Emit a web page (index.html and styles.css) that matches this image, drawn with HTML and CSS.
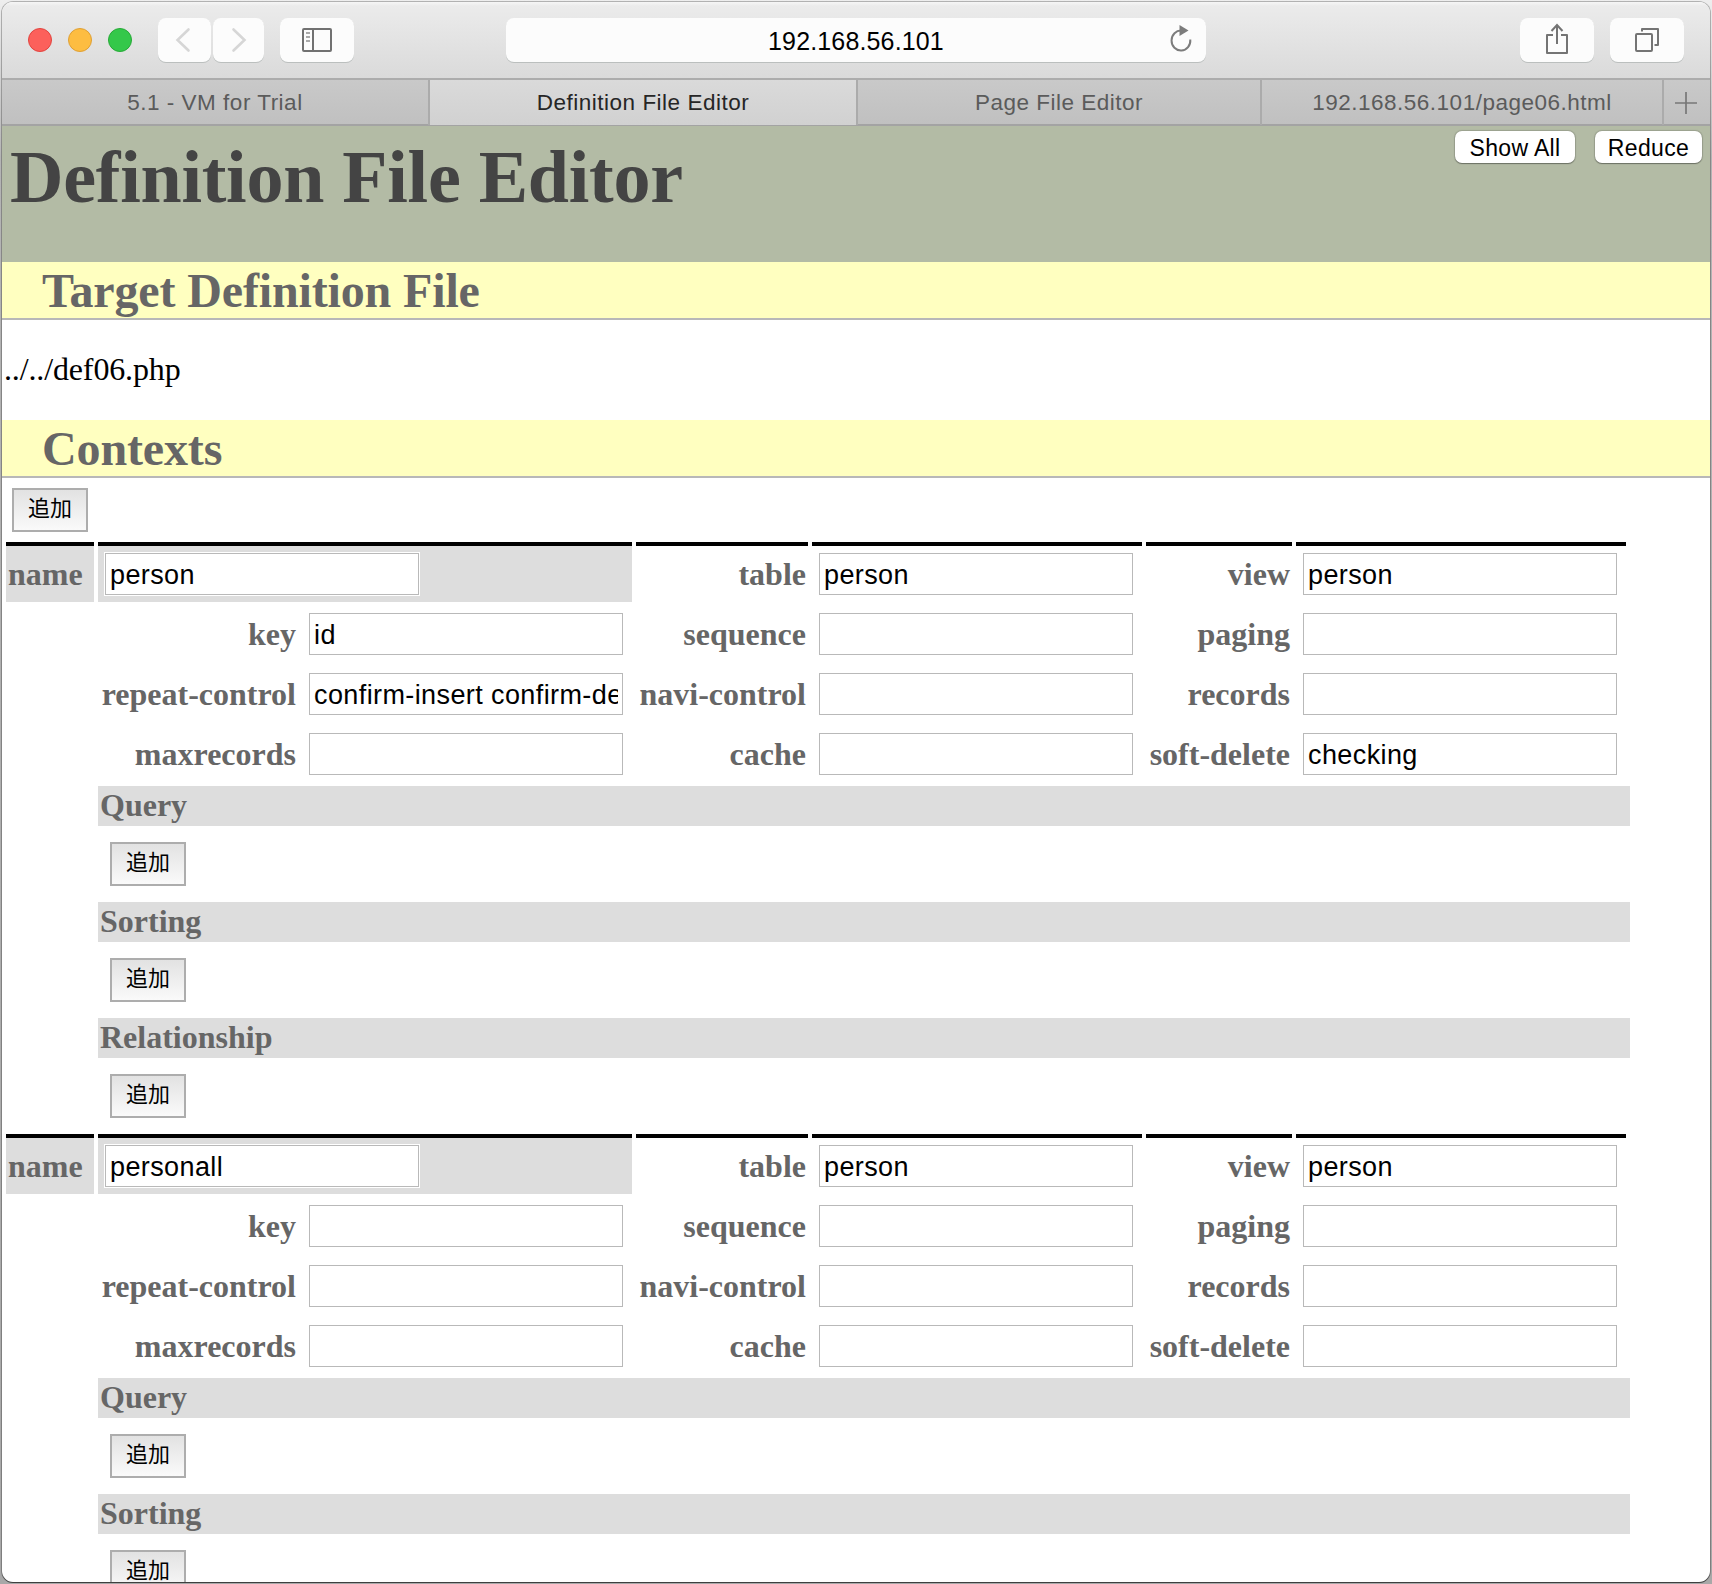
FILE: index.html
```html
<!DOCTYPE html>
<html lang="ja">
<head>
<meta charset="utf-8">
<title>Definition File Editor</title>
<link rel="stylesheet" href="styles.css">
</head>
<body>
<div class="window">
  <div class="toolbar">
    <div class="lights"><span class="light red"></span><span class="light amber"></span><span class="light green"></span></div>
    <div class="tool back"><svg width="52" height="44" viewBox="0 0 52 44"><path d="M30.500 11.500 19.500 22l11 10.500" fill="none" stroke="#d6d6d6" stroke-width="2.600" stroke-linecap="round"/></svg></div>
    <div class="tool forward"><svg width="51" height="44" viewBox="0 0 51 44"><path d="M20.500 11.500 31.500 22l-11 10.500" fill="none" stroke="#d6d6d6" stroke-width="2.600" stroke-linecap="round"/></svg></div>
    <div class="tool sidebar"><svg width="74" height="44" viewBox="0 0 74 44"><g fill="none" stroke="#717171" stroke-width="2"><rect x="23" y="11" width="28" height="22" rx="1"/><path d="M33 11v22"/><path d="M26 15h4M26 19h4M26 23h4" stroke="#aaa"/></g></svg></div>
    <div class="address"><span class="url">192.168.56.101</span><svg class="reload" width="30" height="44" viewBox="0 0 30 44"><path d="M14.500 12.500A9.400 10 0 1 0 23.300 21.500" fill="none" stroke="#7c7c7c" stroke-width="2"/><path d="M12.500 7v11l9-5.500z" fill="#7c7c7c"/></svg></div>
    <div class="tool share"><svg width="74" height="44" viewBox="0 0 74 44"><g fill="none" stroke="#747474" stroke-width="2"><path d="M33 17h-6v18h20V17h-6" stroke-linejoin="round"/><path d="M37 26V7M31.500 13 37 7l5.500 6"/></g></svg></div>
    <div class="tool overview"><svg width="74" height="44" viewBox="0 0 74 44"><g fill="none" stroke="#747474" stroke-width="2" stroke-linejoin="round"><rect x="26" y="16" width="16" height="17" rx="1"/><path d="M32 13.500V11h16v16H44.500"/></g></svg></div>
  </div>
  <div class="tabs">
    <div class="tab">5.1 - VM for Trial</div>
    <div class="tab active">Definition File Editor</div>
    <div class="tab">Page File Editor</div>
    <div class="tab">192.168.56.101/page06.html</div>
    <div class="tab plus"><svg width="24" height="24" viewBox="0 0 24 24"><path d="M12 1v22M1 12h22" stroke="#777" stroke-width="1.700"/></svg></div>
  </div>
  <div class="page">
    <header class="masthead">
      <h1>Definition File Editor</h1>
      <div class="actions"><button class="push show-all">Show All</button><button class="push reduce">Reduce</button></div>
    </header>
    <h2>Target Definition File</h2>
    <p class="path">../../def06.php</p>
    <h2>Contexts</h2>
    <div class="add-row"><button class="add">追加</button></div>

    <section class="context">
      <div class="label name first">name</div><div class="cell wide first"><input class="field" value="person"></div>
      <div class="label first">table</div><div class="cell first"><input class="field" value="person"></div>
      <div class="label first">view</div><div class="cell first"><input class="field" value="person"></div>
      <div class="label key">key</div><div class="cell"><input class="field" value="id"></div>
      <div class="label">sequence</div><div class="cell"><input class="field"></div>
      <div class="label">paging</div><div class="cell"><input class="field"></div>
      <div class="label key">repeat-control</div><div class="cell"><input class="field" value="confirm-insert confirm-delete"></div>
      <div class="label">navi-control</div><div class="cell"><input class="field"></div>
      <div class="label">records</div><div class="cell"><input class="field"></div>
      <div class="label key">maxrecords</div><div class="cell"><input class="field"></div>
      <div class="label">cache</div><div class="cell"><input class="field"></div>
      <div class="label">soft-delete</div><div class="cell"><input class="field" value="checking"></div>
    </section>
    <div class="details">
      <h3>Query</h3><div class="detail-row"><button class="add">追加</button></div>
      <h3>Sorting</h3><div class="detail-row"><button class="add">追加</button></div>
      <h3>Relationship</h3><div class="detail-row"><button class="add">追加</button></div>
    </div>

    <section class="context">
      <div class="label name first">name</div><div class="cell wide first"><input class="field" value="personall"></div>
      <div class="label first">table</div><div class="cell first"><input class="field" value="person"></div>
      <div class="label first">view</div><div class="cell first"><input class="field" value="person"></div>
      <div class="label key">key</div><div class="cell"><input class="field"></div>
      <div class="label">sequence</div><div class="cell"><input class="field"></div>
      <div class="label">paging</div><div class="cell"><input class="field"></div>
      <div class="label key">repeat-control</div><div class="cell"><input class="field"></div>
      <div class="label">navi-control</div><div class="cell"><input class="field"></div>
      <div class="label">records</div><div class="cell"><input class="field"></div>
      <div class="label key">maxrecords</div><div class="cell"><input class="field"></div>
      <div class="label">cache</div><div class="cell"><input class="field"></div>
      <div class="label">soft-delete</div><div class="cell"><input class="field"></div>
    </section>
    <div class="details">
      <h3>Query</h3><div class="detail-row"><button class="add">追加</button></div>
      <h3>Sorting</h3><div class="detail-row"><button class="add">追加</button></div>
    </div>
  </div>
</div>
</body>
</html>
```
FILE: styles.css
```css
* { box-sizing: border-box; }
html { height: 100%; overflow: hidden; }
body {
  margin: 0;
  padding: 2px;
  height: 1584px;
  overflow: hidden;
  background: linear-gradient(#eee, #b4b4b4 10%, #a8a8a8);
  font-family: "Liberation Serif", "Noto Sans CJK JP", serif;
}
.window {
  display: flex;
  flex-direction: column;
  height: 1580px;
  overflow: hidden;
  border-radius: 11px;
  background: #fff;
  box-shadow: 0 0 0 1px rgba(0, 0, 0, .25), 0 1px 0 #555;
}
.toolbar {
  display: flex;
  flex: none;
  align-items: flex-start;
  height: 78px;
  padding: 16px 26px 0;
  border-bottom: 2px solid #acacac;
  background: linear-gradient(#f6f6f6, #ebebeb 4px, #dadada);
}
.lights { display: flex; gap: 16px; padding-top: 10px; width: 130px; }
.light { width: 24px; height: 24px; border-radius: 50%; border: 1px solid #e2443f; background: #fc605b; }
.amber { border-color: #dfa035; background: #fdbd41; }
.green { border-color: #27aa37; background: #34c84a; }
.tool, .address {
  height: 44px;
  border-radius: 8px;
  background: #fcfcfc;
  box-shadow: 0 1px 0 #bbbfbe;
}
.tool svg { display: block; }
.back { width: 53px; }
.forward { width: 51px; margin-left: 2px; }
.sidebar { width: 74px; margin-left: 16px; }
.address { display: flex; justify-content: flex-end; width: 700px; margin-left: 152px; padding-right: 9px; }
.url {
  flex: 1;
  padding-left: 39px;
  font: 25px/47px "Liberation Sans", sans-serif;
  letter-spacing: .15px;
  text-align: center;
}
.share { width: 74px; margin-left: 314px; }
.overview { width: 74px; margin-left: 16px; }

.tabs {
  display: grid;
  flex: none;
  grid-template-columns: 428px 428px 404px 402px 46px;
  height: 46px;
  border-bottom: 2px solid #a3a3a3;
  background: linear-gradient(#c9c9c9, #c0c0c0);
}
.tab {
  border-right: 2px solid #ababab;
  color: #5b5b5b;
  font: 22.5px/45px "Liberation Sans", sans-serif;
  letter-spacing: .5px;
  text-align: center;
}
.active { color: #262626; background: linear-gradient(#dadada, #d1d1d1); }
.plus { display: flex; align-items: center; justify-content: center; border: 0; padding-right: 2px; }

.page { flex: 1; min-height: 0; overflow: hidden; }
.masthead {
  display: flex;
  justify-content: space-between;
  height: 136px;
  padding-left: 8px;
  background: #b3bba5;
}
h1 { margin: 0; color: #444; font-size: 74px; line-height: 103px; letter-spacing: -.25px; font-variant-ligatures: common-ligatures; }
.actions { display: flex; align-items: flex-start; gap: 20px; padding: 5px 8px 0 0; }
.push {
  height: 32px;
  padding: 1px 0 0;
  border: 0;
  border-radius: 7px;
  background: #fff;
  box-shadow: 0 0 1px 1px rgba(0, 0, 0, .14), 0 1px 1px rgba(0, 0, 0, .3);
  color: #000;
  font: 23px/33px "Liberation Sans", sans-serif;
  letter-spacing: .35px;
}
.show-all { width: 120px; }
.reduce { width: 107px; }
h2 {
  height: 58px;
  margin: 0;
  padding-left: 40px;
  border-bottom: 2px solid #b8b8b8;
  background: #ffffc0;
  color: #666;
  font-size: 48px;
  line-height: 57px;
  letter-spacing: -.14px;
}
.path { height: 100px; margin: 0; padding-left: 2px; font-size: 32px; line-height: 99px; letter-spacing: -.14px; }
.add-row { height: 64px; padding: 10px; }
.add {
  display: block;
  width: 76px;
  height: 44px;
  padding: 0 0 7px;
  border: 2px solid #adadad;
  background: linear-gradient(#e2e2e2, #fafafa);
  color: #000;
  font: 22px/33px "Noto Sans CJK JP", sans-serif;
}
.context {
  display: grid;
  grid-template-columns: 88px 200px 330px 172px 330px 146px 330px;
  grid-template-rows: 60px 56px 56px 56px;
  gap: 4px;
  margin: 0 0 4px 4px;
}
.label {
  padding-right: 2px;
  color: #666;
  font-size: 32px;
  font-weight: bold;
  line-height: 56px;
  text-align: right;
  white-space: nowrap;
}
.key { grid-column: 2; }
.cell { display: flex; align-items: center; padding-left: 7px; }
.first { border-top: 4px solid #000; }
.name { padding-left: 2px; background: #ddd; text-align: left; }
.wide { grid-column: 2 / 4; background: #ddd; }
.wide .field { box-shadow: 0 0 0 1px #fff; }
.field {
  width: 314px;
  height: 42px;
  padding: 3px 4px 0;
  border: 1px solid #b9b9b9;
  border-radius: 0;
  outline: 0;
  background: #fff;
  color: #000;
  font: 27px "Liberation Sans", sans-serif;
  letter-spacing: .4px;
}
.details { width: 1532px; margin-left: 96px; }
h3 { height: 40px; margin: 0; padding-left: 2px; background: #ddd; color: #666; font-size: 32px; line-height: 39px; }
.detail-row { padding: 16px 12px; }
```
